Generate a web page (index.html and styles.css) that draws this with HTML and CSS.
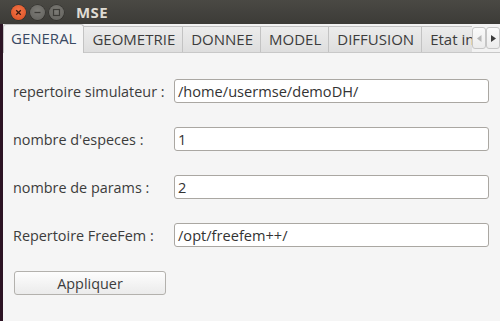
FILE: index.html
```
<!DOCTYPE html>
<html>
<head>
<meta charset="utf-8">
<link rel="stylesheet" href="styles.css">
</head>
<body>
<div class="window">
  <div class="titlebar">
    <div class="wbtns">
      <span class="wbtn close"><svg width="15" height="15" viewBox="0 0 15 15"><path d="M5.2 5.2 L9.8 9.8 M9.8 5.2 L5.2 9.8" stroke="#3a1a10" stroke-width="1.3"/></svg></span>
      <span class="wbtn"><svg width="15" height="15" viewBox="0 0 15 15"><path d="M4.5 7.5 H10.5" stroke="#3c3b37" stroke-width="1.3"/></svg></span>
      <span class="wbtn"><svg width="15" height="15" viewBox="0 0 15 15"><rect x="4.5" y="4.5" width="6" height="6" fill="none" stroke="#3c3b37" stroke-width="1.2"/></svg></span>
    </div>
    <span class="title">MSE</span>
  </div>
  <div class="main">
    <div class="edge"></div>
    <div class="content">
      <div class="tabbar">
        <div class="tab active">GENERAL</div>
        <div class="tab">GEOMETRIE</div>
        <div class="tab">DONNEE</div>
        <div class="tab">MODEL</div>
        <div class="tab">DIFFUSION</div>
        <div class="tab last">Etat in</div>
        <div class="arrows">
          <span class="arrow"><svg width="5" height="7" viewBox="0 0 5 7"><path d="M4.5 0 L0 3.5 L4.5 7Z" fill="#b8b8b8"/></svg></span>
          <span class="arrow"><svg width="5" height="7" viewBox="0 0 5 7"><path d="M0 0 L5 3.5 L0 7Z" fill="#3c3c3c"/></svg></span>
        </div>
      </div>
      <div class="pane">
        <div class="row"><label>repertoire simulateur :</label><div class="field">/home/usermse/demoDH/</div></div>
        <div class="row"><label>nombre d'especes :</label><div class="field">1</div></div>
        <div class="row"><label>nombre de params :</label><div class="field">2</div></div>
        <div class="row"><label>Repertoire FreeFem :</label><div class="field">/opt/freefem++/</div></div>
        <div class="btnrow"><button class="apply">Appliquer</button></div>
      </div>
    </div>
  </div>
</div>
</body>
</html>
```
FILE: styles.css
```
* { box-sizing: border-box; }
html, body { margin: 0; padding: 0; }
body {
  width: 500px; height: 321px; overflow: hidden;
  font-family: "Open Sans", "DejaVu Sans", sans-serif;
  color: #3c3c3c;
  background: #f5f5f5;
}
.window { display: flex; flex-direction: column; height: 321px; }
.titlebar {
  height: 24px;
  background: linear-gradient(#4a4944, #3c3b37);
  display: flex; align-items: center;
  padding-left: 11px;
}
.wbtns { display: flex; gap: 4px; }
.wbtn {
  width: 15px; height: 15px; border-radius: 50%;
  background: radial-gradient(circle at 50% 40%, #7d7c77, #5f5e5a);
  display: flex;
  box-shadow: 0 0 0 0.5px #2e2d2a;
}
.wbtn.close { background: radial-gradient(circle at 50% 40%, #f3774b, #d84a1d); }
.title {
  margin-left: 12px;
  color: #dfdbd2;
  font-weight: bold;
  font-size: 15px;
  letter-spacing: 0.4px;
}
.main { flex: 1; display: flex; }
.edge { width: 3px; background: #2c1424; }
.content { flex: 1; display: flex; flex-direction: column; min-width: 0; }
.tabbar {
  height: 29px;
  display: flex; align-items: flex-end;
  background: #f2f2f2;
  border-bottom: 1px solid #c8c8c8;
  padding-top: 1px;
}
.tab {
  height: 26px;
  padding: 0 7px 0 8px;
  font-size: 15px;
  line-height: 25px;
  background: linear-gradient(#ececec, #dedede);
  border: 1px solid #c3c3c3;
  border-bottom: none;
  border-left: none;
  white-space: nowrap;
  flex: none;
}
.tab.active {
  height: 29px;
  line-height: 27px;
  background: #f5f5f5;
  border-left: 1px solid #c3c3c3;
  border-radius: 3px 3px 0 0;
  margin-bottom: -1px;
  padding: 0 7px 0 7px;
  color: #3b4a63;
}
.tab.last { flex: 1; min-width: 0; padding-right: 0; border-right: none; }
.arrows { display: flex; margin-bottom: 3px; flex: none; }
.arrow {
  width: 14px; height: 22px;
  border: 1px solid #c6c6c6; border-radius: 3px;
  background: linear-gradient(#fafafa, #ececec);
  display: flex; align-items: center; justify-content: center;
}
.pane {
  flex: 1;
  background: #f5f5f5;
  padding: 26px 11px 0 10px;
  display: flex; flex-direction: column;
}
.row { display: flex; align-items: center; height: 24px; margin-bottom: 24px; }
.row label { width: 161px; font-size: 14.4px; white-space: nowrap; }
.field {
  flex: 1; height: 24px;
  background: #fff;
  border: 1px solid #aaa7a2;
  border-radius: 3px;
  padding-left: 3px;
  font-size: 14.6px;
  line-height: 22px;
  color: #333;
}
.btnrow { margin-top: 0; }
.apply {
  width: 152px; height: 24px;
  margin-left: 1px;
  border: 1px solid #b3b1ad;
  border-radius: 3px;
  background: linear-gradient(#fdfdfd, #ebebeb);
  font-family: "Open Sans", "DejaVu Sans", sans-serif;
  font-size: 14.4px;
  color: #3c3c3c;
  padding: 0;
}
```
